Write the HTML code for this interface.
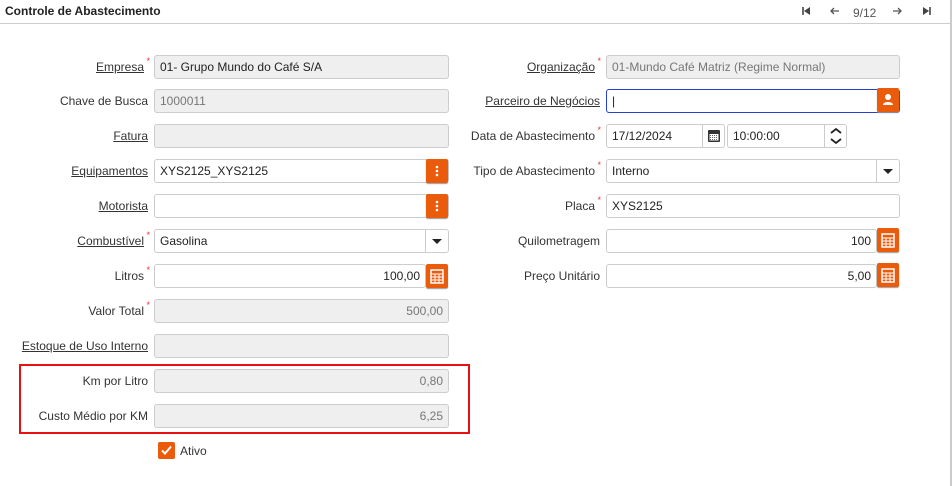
<!DOCTYPE html>
<html><head><meta charset="utf-8"><style>
*{box-sizing:border-box;margin:0;padding:0}
body{width:952px;height:486px;background:#fff;font-family:"Liberation Sans",sans-serif;font-size:12px;color:#222;position:relative;overflow:hidden}
.hdr{position:absolute;left:0;top:0;width:950px;height:24px;border-bottom:1px solid #ccc}
.hdr .t{position:absolute;left:5px;top:4px;font-weight:bold;font-size:12px}
.nav{position:absolute;top:5px;font-size:12px;color:#555}
.sb{position:absolute;right:0;top:0;width:2px;height:486px;background:#ccc}
.lbl{position:absolute;text-align:right;white-space:nowrap;font-size:12px;color:#333}
.lbl u{text-decoration:underline}
.st{color:#e33;font-size:9px;position:absolute;top:-4px;right:-6px}
.in{position:absolute;height:24px;border:1px solid #ccc;border-radius:3px;background:#fff;padding:4px 5px;font-size:12px;white-space:nowrap;overflow:hidden}
.ro{background:#efefef;color:#777}
.r{text-align:right}
.btn{position:absolute;width:22px;height:24px;background:#ea5b0c;border-radius:2px;box-shadow:0 1px 1px #999}
.dd{position:absolute;width:22px;height:22px;border-left:1px solid #ccc}
</style></head><body>
<div class="hdr"><div class="t">Controle de Abastecimento</div>
<svg style="position:absolute;left:800px;top:5px" width="12" height="12"><path d="M3 2v8" stroke="#444" stroke-width="1.6"/><path d="M10 2L4 6l6 4z" fill="#444"/></svg>
<svg style="position:absolute;left:829px;top:5px" width="12" height="12"><path d="M10 6H2M5 3L2 6l3 3" stroke="#555" stroke-width="1.3" fill="none"/></svg>
<div class="nav" style="left:853px;top:6px">9/12</div>
<svg style="position:absolute;left:891px;top:5px" width="12" height="12"><path d="M2 6h8M7 3l3 3-3 3" stroke="#555" stroke-width="1.3" fill="none"/></svg>
<svg style="position:absolute;left:921px;top:5px" width="12" height="12"><path d="M9 2v8" stroke="#444" stroke-width="1.6"/><path d="M2 2l6 4-6 4z" fill="#444"/></svg>
</div>
<div class="sb"></div>

<div class="lbl" style="right:808px;top:60px"><u>Empresa</u><span class="st">*</span></div>
<div class="in ro" style="left:154px;top:55px;width:295px;color:#222">01- Grupo Mundo do Café S/A</div>
<div class="lbl" style="right:804px;top:94px">Chave de Busca</div>
<div class="in ro" style="left:154px;top:89px;width:295px">1000011</div>
<div class="lbl" style="right:804px;top:129px"><u>Fatura</u></div>
<div class="in ro" style="left:154px;top:124px;width:295px"></div>
<div class="lbl" style="right:804px;top:164px"><u>Equipamentos</u></div>
<div class="in" style="left:154px;top:159px;width:295px">XYS2125_XYS2125</div>
<div class="btn" style="left:426px;top:159px"><svg width="22" height="24"><g fill="#fff"><circle cx="11" cy="8" r="1.3"/><circle cx="11" cy="12" r="1.3"/><circle cx="11" cy="16" r="1.3"/></g></svg></div>
<div class="lbl" style="right:804px;top:199px"><u>Motorista</u></div>
<div class="in" style="left:154px;top:194px;width:295px"></div>
<div class="btn" style="left:426px;top:194px"><svg width="22" height="24"><g fill="#fff"><circle cx="11" cy="8" r="1.3"/><circle cx="11" cy="12" r="1.3"/><circle cx="11" cy="16" r="1.3"/></g></svg></div>
<div class="lbl" style="right:808px;top:234px"><u>Combustível</u><span class="st">*</span></div>
<div class="in" style="left:154px;top:229px;width:295px">Gasolina</div>
<div class="dd" style="left:425px;top:230px"><svg width="22" height="22"><path d="M6 9h10l-5 5z" fill="#222"/></svg></div>
<div class="lbl" style="right:808px;top:269px">Litros<span class="st">*</span></div>
<div class="in r" style="left:154px;top:264px;width:272px;color:#222">100,00</div>
<div class="btn" style="left:426px;top:264px"><svg width="22" height="24"><rect x="5" y="6" width="12" height="13" fill="none" stroke="#fff" stroke-width="1.5"/><path d="M5 10h12M5 13h12M5 16h12M9 10v9M13 10v9" stroke="#fff" stroke-width="1"/></svg></div>
<div class="lbl" style="right:808px;top:304px">Valor Total<span class="st">*</span></div>
<div class="in ro r" style="left:154px;top:299px;width:295px">500,00</div>
<div class="lbl" style="right:804px;top:339px"><u>Estoque de Uso Interno</u></div>
<div class="in ro" style="left:154px;top:334px;width:295px"></div>
<div style="position:absolute;left:19px;top:364px;width:451px;height:70px;border:2px solid #e81010"></div>
<div class="lbl" style="right:804px;top:374px">Km por Litro</div>
<div class="in ro r" style="left:154px;top:369px;width:295px">0,80</div>
<div class="lbl" style="right:804px;top:409px">Custo Médio por KM</div>
<div class="in ro r" style="left:154px;top:404px;width:295px">6,25</div>
<div style="position:absolute;left:158px;top:442px;width:17px;height:17px;background:#ea5b0c;border-radius:2px"><svg width="17" height="17"><path d="M4 8.5l3 3 6-7" stroke="#fff" stroke-width="2" fill="none"/></svg></div>
<div class="lbl" style="left:180px;top:444px">Ativo</div>

<div class="lbl" style="right:357px;top:60px"><u>Organização</u><span class="st">*</span></div>
<div class="in ro" style="left:606px;top:55px;width:294px">01-Mundo Café Matriz (Regime Normal)</div>
<div class="lbl" style="right:352px;top:94px"><u>Parceiro de Negócios</u></div>
<div class="in" style="left:606px;top:89px;width:294px;border-color:#2540d0">|</div>
<div class="btn" style="left:877px;top:88px"><svg width="22" height="24"><circle cx="11" cy="9" r="3" fill="#fff"/><path d="M6 17c0-4 10-4 10 0z" fill="#fff"/></svg></div>
<div class="lbl" style="right:357px;top:129px">Data de Abastecimento<span class="st">*</span></div>
<div class="in" style="left:606px;top:124px;width:119px">17/12/2024</div>
<div class="dd" style="left:702px;top:125px"><svg width="22" height="22"><rect x="5" y="5" width="12" height="12" rx="1" fill="#333"/><rect x="6.5" y="9" width="9" height="6.5" fill="#fff"/><path d="M7 10.5h8M7 12.5h8M7 14.5h8" stroke="#333" stroke-width=".7" stroke-dasharray="1 1"/></svg></div>
<div class="in" style="left:727px;top:124px;width:120px">10:00:00</div>
<div class="dd" style="left:824px;top:125px"><svg width="22" height="22"><path d="M6 8l5-4 5 4M6 14l5 4 5-4" stroke="#222" stroke-width="1.8" fill="none"/></svg></div>
<div class="lbl" style="right:357px;top:164px">Tipo de Abastecimento<span class="st">*</span></div>
<div class="in" style="left:606px;top:159px;width:294px">Interno</div>
<div class="dd" style="left:876px;top:160px"><svg width="22" height="22"><path d="M6 9h10l-5 5z" fill="#222"/></svg></div>
<div class="lbl" style="right:357px;top:199px">Placa<span class="st">*</span></div>
<div class="in" style="left:606px;top:194px;width:294px">XYS2125</div>
<div class="lbl" style="right:352px;top:234px">Quilometragem</div>
<div class="in r" style="left:606px;top:229px;width:271px">100</div>
<div class="btn" style="left:877px;top:228px"><svg width="22" height="24"><rect x="5" y="6" width="12" height="13" fill="none" stroke="#fff" stroke-width="1.5"/><path d="M5 10h12M5 13h12M5 16h12M9 10v9M13 10v9" stroke="#fff" stroke-width="1"/></svg></div>
<div class="lbl" style="right:352px;top:269px">Preço Unitário</div>
<div class="in r" style="left:606px;top:264px;width:271px">5,00</div>
<div class="btn" style="left:877px;top:263px"><svg width="22" height="24"><rect x="5" y="6" width="12" height="13" fill="none" stroke="#fff" stroke-width="1.5"/><path d="M5 10h12M5 13h12M5 16h12M9 10v9M13 10v9" stroke="#fff" stroke-width="1"/></svg></div>
</body></html>
